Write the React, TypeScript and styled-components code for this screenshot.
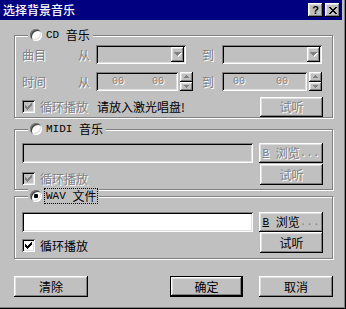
import React from 'react';
import styled, { createGlobalStyle, css } from 'styled-components';

const GlobalStyle = createGlobalStyle`
  html, body {
    margin: 0;
    padding: 0;
    background: #c0c0c0;
  }
  body {
    font-family: "Noto Sans CJK SC", "Liberation Sans", sans-serif;
    font-size: 12px;
    line-height: 1;
    color: #000;
  }
  * {
    box-sizing: border-box;
  }
`;

const raised = css`
  background: #c0c0c0;
  box-shadow: inset -1px -1px 0 #000, inset 1px 1px 0 #fff, inset -2px -2px 0 #808080,
    inset 2px 2px 0 #dfdfdf;
`;

const sunken = css`
  box-shadow: inset 1px 1px 0 #808080, inset -1px -1px 0 #fff, inset 2px 2px 0 #000,
    inset -2px -2px 0 #dfdfdf;
`;

const grayed = css`
  color: #808080;
  text-shadow: 1px 1px 0 #fff;
`;

// pixel patterns for the little glyphs
const CLOSE = ['xx....xx', '.xx..xx.', '..xxxx..', '...xx...', '..xxxx..', '.xx..xx.', 'xx....xx'];
const DOWN = ['xxxxxxx', '.xxxxx.', '..xxx..', '...x...'];
const SMALL_UP = ['..x..', '.xxx.', 'xxxxx'];
const SMALL_DOWN = ['xxxxx', '.xxx.', '..x..'];
const CHECK = ['......x', '.....xx', 'x...xxx', 'xx.xxx.', 'xxxxx..', '.xxx...', '..x....'];

const PixelGlyph: React.FC<{ rows: string[]; color: string; shadow?: string }> = ({ rows, color, shadow }) => {
  const w = rows[0].length;
  const h = rows.length;
  const d = rows
    .flatMap((r, y) => r.split('').map((c, x) => (c === 'x' ? `M${x} ${y}h1v1h-1z` : '')))
    .join('');
  const pad = shadow ? 1 : 0;
  return (
    <svg width={w + pad} height={h + pad} viewBox={`0 0 ${w + pad} ${h + pad}`} shapeRendering="crispEdges">
      {shadow && <path d={d} fill={shadow} transform="translate(1 1)" />}
      <path d={d} fill={color} />
    </svg>
  );
};

const Window = styled.div`
  width: 346px;
  height: 309px;
  display: flex;
  flex-direction: column;
  background: #c0c0c0;
  box-shadow: inset -1px -1px 0 #000, inset -2px -2px 0 #808080;
`;

const TitleBar = styled.div`
  width: 342px;
  height: 20px;
  flex: none;
  display: flex;
  align-items: center;
  padding: 0 2px 0 3px;
  background: #000080;
  color: #fff;
`;

const Title = styled.span`
  flex: 1;
  font-size: 12px;
  font-weight: 500;
`;

const CaptionButton = styled.span`
  ${raised};
  width: 15px;
  height: 14px;
  margin-left: 2px;
  display: flex;
  align-items: center;
  justify-content: center;
  font: bold 11px "Liberation Sans", sans-serif;
  color: #000;
`;

const Body = styled.div`
  display: flex;
  flex-direction: column;
  padding-left: 14px;
`;

const Group = styled.div<{ $mt: number; $pb: number }>`
  width: 319px;
  margin-top: ${(p) => p.$mt}px;
  padding: 0 9px ${(p) => p.$pb}px 7px;
  border: 1px solid #808080;
  box-shadow: inset 1px 1px 0 #fff, 1px 1px 0 #fff;
  display: flex;
  flex-direction: column;
`;

const Legend = styled.div`
  align-self: flex-start;
  display: flex;
  align-items: center;
  gap: 3px;
  height: 14px;
  margin: -8px 0 0 6px;
  padding: 0 2px;
  background: #c0c0c0;
`;

const LegendText = styled.span<{ $focus?: boolean }>`
  display: flex;
  align-items: center;
  padding: 1px 1px;
  ${(p) =>
    p.$focus &&
    css`
      outline: 1px dotted #000;
      outline-offset: 0;
    `}
`;

const Latin = styled.span<{ $size?: number }>`
  font-family: "Liberation Mono", "DejaVu Sans Mono", monospace;
  font-size: ${(p) => p.$size ?? 11}px;
  white-space: pre;
`;

const Radio = styled.span`
  width: 12px;
  height: 12px;
  flex: none;
  border-radius: 50%;
  background: #fff;
  box-shadow: inset 1px 1px 0 #808080, inset -1px -1px 0 #fff, inset 2px 2px 0 #404040,
    inset -2px -2px 0 #dfdfdf;
  display: flex;
  align-items: center;
  justify-content: center;
`;

const RadioDot = styled.span`
  width: 4px;
  height: 4px;
  border-radius: 1px;
  background: #000;
`;

const Row = styled.div<{ $mt: number; $h?: number; $top?: boolean }>`
  display: flex;
  align-items: ${(p) => (p.$top ? 'flex-start' : 'center')};
  margin-top: ${(p) => p.$mt}px;
  height: ${(p) => p.$h ?? 19}px;
`;

const Label = styled.span<{ $w?: number; $pl?: number; $ml?: number; $disabled?: boolean }>`
  flex: none;
  ${(p) => p.$w !== undefined && `width: ${p.$w}px;`}
  padding-left: ${(p) => p.$pl ?? 0}px;
  margin-left: ${(p) => p.$ml ?? 0}px;
  white-space: nowrap;
  ${(p) => p.$disabled && grayed};
`;

const Cell = styled.div<{ $w: number }>`
  width: ${(p) => p.$w}px;
  flex: none;
  display: flex;
`;

const Combo = styled.div<{ $w: number }>`
  ${sunken};
  width: ${(p) => p.$w}px;
  height: 19px;
  padding: 2px;
  background: #c0c0c0;
  display: flex;
  justify-content: flex-end;
`;

const DropButton = styled.span`
  ${raised};
  width: 13px;
  height: 15px;
  display: flex;
  align-items: center;
  justify-content: center;
`;

const TimeEdit = styled.div<{ $w: number; $pl: number; $pr: number }>`
  ${sunken};
  ${grayed};
  width: ${(p) => p.$w}px;
  height: 19px;
  background: #c0c0c0;
  display: flex;
  align-items: center;
  justify-content: space-between;
  padding: 0 ${(p) => p.$pr}px 0 ${(p) => p.$pl}px;
`;

const SpinButtons = styled.div`
  width: 13px;
  height: 19px;
  margin-left: 2px;
  display: flex;
  flex-direction: column;
`;

const SpinButton = styled.span`
  ${raised};
  flex: 1;
  display: flex;
  align-items: center;
  justify-content: center;
`;

const CheckItem = styled.div<{ $mt?: number }>`
  display: flex;
  align-items: center;
  gap: 5px;
  margin-top: ${(p) => p.$mt ?? 0}px;
`;

const CheckBox = styled.span<{ $disabled?: boolean }>`
  ${sunken};
  width: 13px;
  height: 13px;
  flex: none;
  background: ${(p) => (p.$disabled ? '#c0c0c0' : '#fff')};
  display: flex;
  align-items: center;
  justify-content: center;
`;

const Edit = styled.div<{ $disabled?: boolean }>`
  ${sunken};
  width: 231px;
  height: 20px;
  flex: none;
  background: ${(p) => (p.$disabled ? '#c0c0c0' : '#fff')};
`;

const Button = styled.span<{ $w: number; $h?: number; $default?: boolean; $disabled?: boolean; $push?: boolean; $ml?: number }>`
  ${raised};
  width: ${(p) => p.$w}px;
  height: ${(p) => p.$h ?? 20}px;
  flex: none;
  display: flex;
  align-items: center;
  justify-content: center;
  white-space: nowrap;
  margin-left: ${(p) => (p.$push ? 'auto' : `${p.$ml ?? 0}px`)};
  ${(p) =>
    p.$default &&
    css`
      box-shadow: inset 0 0 0 1px #000, inset -2px -2px 0 #000, inset 2px 2px 0 #fff,
        inset -3px -3px 0 #808080, inset 3px 3px 0 #dfdfdf;
    `}
  ${(p) => p.$disabled && grayed};
`;

const Accel = styled.span`
  text-decoration: underline;
  font-family: "Liberation Mono", "DejaVu Sans Mono", monospace;
  font-size: 11px;
`;

const Footer = styled.div`
  width: 319px;
  height: 21px;
  margin-top: 17px;
  display: flex;
`;

const Check: React.FC<{ disabled?: boolean }> = ({ disabled }) => (
  <CheckBox $disabled={disabled}>
    <PixelGlyph rows={CHECK} color={disabled ? '#808080' : '#000'} />
  </CheckBox>
);

const Spin: React.FC<{ w: number; pl: number; pr: number }> = ({ w, pl, pr }) => (
  <>
    <TimeEdit $w={w} $pl={pl} $pr={pr}>
      <Latin $size={10}>00</Latin>
      <Latin $size={10}>00</Latin>
    </TimeEdit>
    <SpinButtons>
      <SpinButton>
        <PixelGlyph rows={SMALL_UP} color="#808080" />
      </SpinButton>
      <SpinButton>
        <PixelGlyph rows={SMALL_DOWN} color="#808080" />
      </SpinButton>
    </SpinButtons>
  </>
);

const DropCombo: React.FC<{ w: number }> = ({ w }) => (
  <Combo $w={w}>
    <DropButton>
      <PixelGlyph rows={DOWN} color="#808080" shadow="#fff" />
    </DropButton>
  </Combo>
);

const Browse: React.FC<{ disabled?: boolean }> = ({ disabled }) => (
  <Button $w={64} $push $disabled={disabled}>
    <Accel>B</Accel>
    <Latin> </Latin>浏览<Latin style={{ color: '#808080' }}>...</Latin>
  </Button>
);

const App: React.FC = () => {
  return (
    <>
      <GlobalStyle />
      <Window>
        <TitleBar>
          <Title>选择背景音乐</Title>
          <CaptionButton>?</CaptionButton>
          <CaptionButton>
            <PixelGlyph rows={CLOSE} color="#000" />
          </CaptionButton>
        </TitleBar>
        <Body>
          <Group $mt={15} $pb={1}>
            <Legend>
              <Radio />
              <LegendText>
                <Latin>CD </Latin>音乐
              </LegendText>
            </Legend>
            <Row $mt={3}>
              <Label $w={56} $disabled>曲目</Label>
              <Label $w={18} $disabled>从</Label>
              <Cell $w={98}>
                <DropCombo w={90} />
              </Cell>
              <Label $w={28} $pl={8} $disabled>到</Label>
              <DropCombo w={100} />
            </Row>
            <Row $mt={8}>
              <Label $w={56} $disabled>时间</Label>
              <Label $w={18} $disabled>从</Label>
              <Cell $w={98}>
                <Spin w={82} pl={16} pr={14} />
              </Cell>
              <Label $w={28} $pl={8} $disabled>到</Label>
              <Spin w={85} pl={11} pr={19} />
            </Row>
            <Row $mt={6}>
              <CheckItem>
                <Check disabled />
                <Label $disabled>循环播放</Label>
              </CheckItem>
              <Label $ml={9}>请放入激光唱盘!</Label>
              <Button $w={63} $push $disabled>试听</Button>
            </Row>
          </Group>

          <Group $mt={11} $pb={4}>
            <Legend>
              <Radio />
              <LegendText>
                <Latin>MIDI </Latin>音乐
              </LegendText>
            </Legend>
            <Row $mt={7} $h={20}>
              <Edit $disabled />
              <Browse disabled />
            </Row>
            <Row $mt={1} $h={21} $top>
              <CheckItem $mt={8}>
                <Check disabled />
                <Label $disabled>循环播放</Label>
              </CheckItem>
              <Button $w={63} $h={21} $push $disabled>试听</Button>
            </Row>
          </Group>

          <Group $mt={6} $pb={5}>
            <Legend>
              <Radio>
                <RadioDot />
              </Radio>
              <LegendText $focus>
                <Latin>WAV </Latin>文件
              </LegendText>
            </Legend>
            <Row $mt={9} $h={20}>
              <Edit />
              <Browse />
            </Row>
            <Row $mt={0} $h={21} $top>
              <CheckItem $mt={7}>
                <Check />
                <Label>循环播放</Label>
              </CheckItem>
              <Button $w={63} $h={21} $push>试听</Button>
            </Row>
          </Group>

          <Footer>
            <Button $w={74} $h={21}>清除</Button>
            <Button $w={73} $h={21} $push $default>确定</Button>
            <Button $w={74} $h={21} $ml={16}>取消</Button>
          </Footer>
        </Body>
      </Window>
    </>
  );
};

export default App;
